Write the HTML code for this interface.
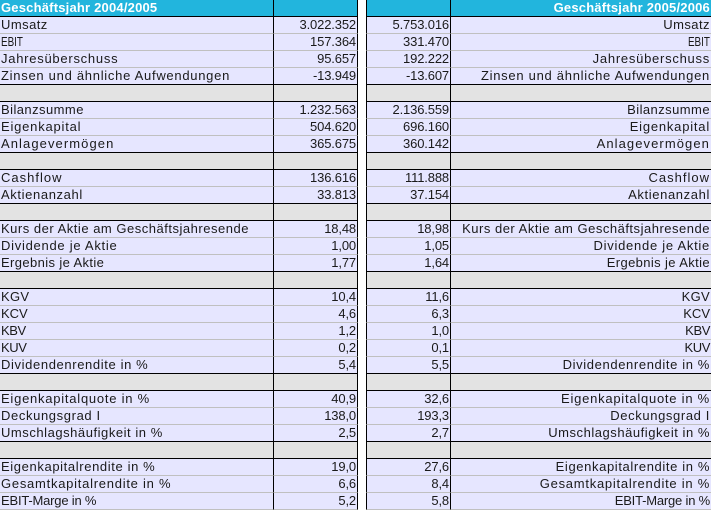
<!DOCTYPE html>
<html lang="de"><head><meta charset="utf-8"><style>
html,body{margin:0;padding:0;background:#fff;width:711px;height:509px;overflow:hidden}
table{position:absolute;left:0;top:0;border-collapse:separate;border-spacing:0;table-layout:fixed;width:711px;font:13px/16px "Liberation Sans",sans-serif;color:#1a1a1a}
td{height:16px;padding:0;background:#e6e6ff;border-bottom:1px solid #c0c0c0;white-space:nowrap;overflow:hidden;box-sizing:content-box}
td.a{padding-left:1px;border-right:1px solid #000;letter-spacing:var(--s,.62px)}
td.b{text-align:right;padding-right:1px;border-right:1px solid #000;letter-spacing:-.15px}
td.g{background:#fff;border-bottom:0}
td.c{text-align:right;padding-right:1px;border-left:1px solid #000;border-right:1px solid #000;letter-spacing:-.15px}
td.d{text-align:right;padding-right:1px;letter-spacing:var(--s,.62px)}
td span{display:inline-block;transform:scaleX(.76)}
td.a span{transform-origin:0 50%}
td.d span{transform-origin:100% 50%}
tr.k td{border-bottom-color:#000}
tr.k td.g,tr.x td.g{border-bottom:0}
tr.x td{background:#e3e3e3;border-bottom-color:#000}
tr.x td.g{background:#fff}
tr.h td{background:#22b5dd;border-bottom-color:#000;color:#fff;font-weight:bold;letter-spacing:.2px}
tr.h td.g{background:#fff}
</style></head><body>
<table>
<colgroup><col style="width:274px"><col style="width:84px"><col style="width:8px"><col style="width:85px"><col style="width:260px"></colgroup>
<tr class="h"><td class="a" style="letter-spacing:.2px">Geschäftsjahr 2004/2005</td><td class="b"></td><td class="g"></td><td class="c"></td><td class="d" style="letter-spacing:.2px">Geschäftsjahr 2005/2006</td></tr>
<tr style="--s:.45px"><td class="a">Umsatz</td><td class="b">3.022.352</td><td class="g"></td><td class="c">5.753.016</td><td class="d">Umsatz</td></tr>
<tr style="--s:0px"><td class="a"><span>EBIT</span></td><td class="b">157.364</td><td class="g"></td><td class="c">331.470</td><td class="d"><span>EBIT</span></td></tr>
<tr style="--s:.74px"><td class="a">Jahresüberschuss</td><td class="b">95.657</td><td class="g"></td><td class="c">192.222</td><td class="d">Jahresüberschuss</td></tr>
<tr class="k" style="--s:.72px"><td class="a">Zinsen und ähnliche Aufwendungen</td><td class="b">-13.949</td><td class="g"></td><td class="c">-13.607</td><td class="d">Zinsen und ähnliche Aufwendungen</td></tr>
<tr class="x"><td class="a"></td><td class="b"></td><td class="g"></td><td class="c"></td><td class="d"></td></tr>
<tr style="--s:.44px"><td class="a">Bilanzsumme</td><td class="b">1.232.563</td><td class="g"></td><td class="c">2.136.559</td><td class="d">Bilanzsumme</td></tr>
<tr style="--s:.79px"><td class="a">Eigenkapital</td><td class="b">504.620</td><td class="g"></td><td class="c">696.160</td><td class="d">Eigenkapital</td></tr>
<tr class="k" style="--s:1.08px"><td class="a">Anlagevermögen</td><td class="b">365.675</td><td class="g"></td><td class="c">360.142</td><td class="d">Anlagevermögen</td></tr>
<tr class="x"><td class="a"></td><td class="b"></td><td class="g"></td><td class="c"></td><td class="d"></td></tr>
<tr style="--s:1px"><td class="a">Cashflow</td><td class="b">136.616</td><td class="g"></td><td class="c">111.888</td><td class="d">Cashflow</td></tr>
<tr class="k"><td class="a">Aktienanzahl</td><td class="b">33.813</td><td class="g"></td><td class="c">37.154</td><td class="d">Aktienanzahl</td></tr>
<tr class="x"><td class="a"></td><td class="b"></td><td class="g"></td><td class="c"></td><td class="d"></td></tr>
<tr style="--s:.51px"><td class="a">Kurs der Aktie am Geschäftsjahresende</td><td class="b">18,48</td><td class="g"></td><td class="c">18,98</td><td class="d">Kurs der Aktie am Geschäftsjahresende</td></tr>
<tr style="--s:.73px"><td class="a">Dividende je Aktie</td><td class="b">1,00</td><td class="g"></td><td class="c">1,05</td><td class="d">Dividende je Aktie</td></tr>
<tr class="k" style="--s:.38px"><td class="a">Ergebnis je Aktie</td><td class="b">1,77</td><td class="g"></td><td class="c">1,64</td><td class="d">Ergebnis je Aktie</td></tr>
<tr class="x"><td class="a"></td><td class="b"></td><td class="g"></td><td class="c"></td><td class="d"></td></tr>
<tr style="--s:.3px"><td class="a">KGV</td><td class="b">10,4</td><td class="g"></td><td class="c">11,6</td><td class="d">KGV</td></tr>
<tr style="--s:0px"><td class="a">KCV</td><td class="b">4,6</td><td class="g"></td><td class="c">6,3</td><td class="d">KCV</td></tr>
<tr style="--s:-.4px"><td class="a">KBV</td><td class="b">1,2</td><td class="g"></td><td class="c">1,0</td><td class="d">KBV</td></tr>
<tr style="--s:-.4px"><td class="a">KUV</td><td class="b">0,2</td><td class="g"></td><td class="c">0,1</td><td class="d">KUV</td></tr>
<tr class="k"><td class="a">Dividendenrendite in %</td><td class="b">5,4</td><td class="g"></td><td class="c">5,5</td><td class="d">Dividendenrendite in %</td></tr>
<tr class="x"><td class="a"></td><td class="b"></td><td class="g"></td><td class="c"></td><td class="d"></td></tr>
<tr style="--s:.76px"><td class="a">Eigenkapitalquote in %</td><td class="b">40,9</td><td class="g"></td><td class="c">32,6</td><td class="d">Eigenkapitalquote in %</td></tr>
<tr><td class="a">Deckungsgrad I</td><td class="b">138,0</td><td class="g"></td><td class="c">193,3</td><td class="d">Deckungsgrad I</td></tr>
<tr class="k" style="--s:.54px"><td class="a">Umschlagshäufigkeit in %</td><td class="b">2,5</td><td class="g"></td><td class="c">2,7</td><td class="d">Umschlagshäufigkeit in %</td></tr>
<tr class="x"><td class="a"></td><td class="b"></td><td class="g"></td><td class="c"></td><td class="d"></td></tr>
<tr><td class="a">Eigenkapitalrendite in %</td><td class="b">19,0</td><td class="g"></td><td class="c">27,6</td><td class="d">Eigenkapitalrendite in %</td></tr>
<tr style="--s:.74px"><td class="a">Gesamtkapitalrendite in %</td><td class="b">6,6</td><td class="g"></td><td class="c">8,4</td><td class="d">Gesamtkapitalrendite in %</td></tr>
<tr style="--s:-.2px"><td class="a">EBIT-Marge in %</td><td class="b">5,2</td><td class="g"></td><td class="c">5,8</td><td class="d">EBIT-Marge in %</td></tr>
</table>
</body></html>
